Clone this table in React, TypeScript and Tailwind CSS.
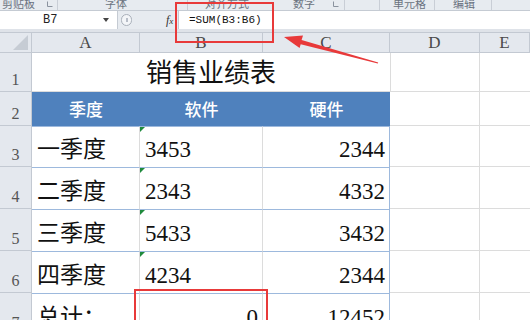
import React from "react";

const SERIF = "font-['Liberation_Serif','Noto_Sans_CJK_SC',serif]";
const CJK = "font-['Noto_Sans_CJK_SC',sans-serif]";
const GRID = "grid grid-cols-[32px_108px_123px_127px_90px_1fr]";

function RowHead({ n, h }: { n: string; h: string }) {
  return (
    <div className={`${h} flex items-end justify-center bg-[#e4e8ee] border-r border-b border-[#c3c9d2] text-[16px] leading-[18px] pb-[2px] text-[#555] font-['Liberation_Serif',serif]`}>
      {n}
    </div>
  );
}

function Tri() {
  return <div className="absolute left-0 top-0 w-0 h-0 border-t-[5px] border-r-[5px] border-t-[#1f8a3c] border-r-transparent" />;
}

function Launcher() {
  return (
    <svg width="6" height="6" viewBox="0 0 6 6" className="mt-[1px]">
      <path d="M0.5 0.5 V5.5 H5.5" fill="none" stroke="#8a929e" strokeWidth="1" />
    </svg>
  );
}

const rows = [
  { n: "3", label: "一季度", b: "3453", c: "2344", h: "h-[41px]" },
  { n: "4", label: "二季度", b: "2343", c: "4332", h: "h-[42px]" },
  { n: "5", label: "三季度", b: "5433", c: "3432", h: "h-[42px]" },
  { n: "6", label: "四季度", b: "4234", c: "2344", h: "h-[42px]" },
];

const cellText = `flex items-end pb-[4px] text-[23px] leading-[26px] text-[#111] ${SERIF}`;

export default function App() {
  return (
    <div className="relative w-[530px] h-[320px] overflow-hidden bg-white">
      {/* ribbon group labels (bottom strip only) */}
      <div className={`h-[11px] bg-[#e7ebf0] border-b border-[#c5cbd3] flex text-[11px] text-[#6b7380] overflow-hidden leading-[12px] ${CJK}`}>
        <div className="w-[58px] shrink-0 border-r border-[#c9ced6] flex items-start justify-between pl-[2px] pr-[4px]">
          <span className="-mt-[3px]">剪贴板</span>
          <Launcher />
        </div>
        <div className="w-[130px] shrink-0 border-r border-[#c9ced6] flex pl-[47px]">
          <span className="-mt-[3px]">字体</span>
        </div>
        <div className="w-[92px] shrink-0 flex pl-[17px]">
          <span className="-mt-[3px]">对齐方式</span>
        </div>
        <div className="w-[65px] shrink-0 border-r border-[#c9ced6] flex items-start justify-between pl-[13px] pr-[5px]">
          <span className="-mt-[3px]">数字</span>
          <Launcher />
        </div>
        <div className="w-[35px] shrink-0 border-r border-[#c9ced6]" />
        <div className="w-[55px] shrink-0 border-r border-[#c9ced6] flex pl-[13px]">
          <span className="-mt-[3px]">单元格</span>
        </div>
        <div className="w-[57px] shrink-0 border-r border-[#c9ced6] flex pl-[18px]">
          <span className="-mt-[3px]">编辑</span>
        </div>
        <div className="flex-1" />
      </div>

      {/* formula bar */}
      <div className="h-[18px] flex bg-[#e7ebf0]">
        <div className="w-[118px] bg-white border-r border-[#c5cbd3] flex items-center">
          <span className="ml-[43px] text-[12px] leading-[16px] text-[#222] font-['Liberation_Mono',monospace]">B7</span>
          <span className="ml-[46px] w-0 h-0 border-l-[3px] border-r-[3px] border-t-[4px] border-l-transparent border-r-transparent border-t-[#444]" />
        </div>
        <div className="w-[60px] flex items-center">
          <div className="ml-[3px] w-[11px] h-[12px] rounded-full border border-[#a9b0ba] bg-[#f3f5f8] flex items-center justify-center">
            <div className="w-[2px] h-[4px] bg-[#b8bec8]" />
          </div>
          <span className={`ml-[34px] italic text-[12px] leading-[16px] text-[#333] ${SERIF}`}>
            f<span className="text-[9px]">x</span>
          </span>
        </div>
        <div className="flex-1 bg-white border-l border-[#c5cbd3] flex items-center pl-[10px]">
          <span className="text-[11px] leading-[16px] text-[#111] font-['Liberation_Mono',monospace]">=SUM(B3:B6)</span>
        </div>
      </div>
      <div className="h-[3px] bg-[#dfe3e9]" />

      {/* sheet */}
      <div className={GRID}>
        {/* column headers */}
        <div className="h-[21px] bg-[#e4e8ee] border-t border-r border-b border-[#c3c9d2] flex items-end justify-end pr-[3px] pb-[2px]">
          <svg width="15" height="15" viewBox="0 0 15 15">
            <polygon points="15,0 15,15 0,15" fill="#c6ccd4" />
          </svg>
        </div>
        {["A", "B", "C", "D", "E"].map((l) => (
          <div key={l} className={`h-[21px] bg-[#e4e8ee] border-t border-r border-b border-[#c3c9d2] flex items-end justify-center text-[17px] leading-[18px] text-[#4a4a4a] ${SERIF}`}>
            {l}
          </div>
        ))}

        {/* row 1 */}
        <RowHead n="1" h="h-[39px]" />
        <div className={`col-span-3 border-b border-[#dcdcdc] flex items-end justify-center pb-[2px] text-[26px] leading-[30px] text-[#111] ${SERIF}`}>
          销售业绩表
        </div>
        <div className="border-r border-b border-[#dcdcdc] border-l" />
        <div className="border-b border-[#dcdcdc]" />

        {/* row 2 */}
        <RowHead n="2" h="h-[34px]" />
        <div className={`bg-[#4f81bd] flex items-center justify-center text-white text-[17px] font-medium ${CJK}`}>季度</div>
        <div className={`bg-[#4f81bd] flex items-center justify-center text-white text-[17px] font-medium ${CJK}`}>软件</div>
        <div className={`bg-[#4f81bd] flex items-center justify-center text-white text-[17px] font-medium ${CJK}`}>硬件</div>
        <div className="border-r border-b border-[#dcdcdc]" />
        <div className="border-b border-[#dcdcdc]" />

        {rows.map((r) => (
          <React.Fragment key={r.n}>
            <RowHead n={r.n} h={r.h} />
            <div className={`border-t border-[#9db9dd] border-r border-r-[#dcdcdc] pl-[5px] ${cellText}`}>{r.label}</div>
            <div className={`relative border-t border-[#9db9dd] border-r border-r-[#dcdcdc] pl-[5px] ${cellText}`}>
              <Tri />
              {r.b}
            </div>
            <div className={`border-t border-[#9db9dd] border-r border-r-[#9db9dd] justify-end pr-[4px] ${cellText}`}>{r.c}</div>
            <div className="border-r border-b border-[#dcdcdc]" />
            <div className="border-b border-[#dcdcdc]" />
          </React.Fragment>
        ))}

        {/* row 7 */}
        <RowHead n="7" h="h-[42px]" />
        <div className={`border-t border-[#9db9dd] border-r border-r-[#dcdcdc] pl-[5px] ${cellText}`}>总计：</div>
        <div className={`border-t border-[#9db9dd] border-r border-r-[#dcdcdc] justify-end pr-[4px] ${cellText}`}>0</div>
        <div className={`border-t border-[#9db9dd] border-r border-r-[#9db9dd] justify-end pr-[4px] ${cellText}`}>12452</div>
        <div className="border-r border-b border-[#dcdcdc]" />
        <div className="border-b border-[#dcdcdc]" />
      </div>

      {/* annotations */}
      <div className="absolute left-[175px] top-[2px] w-[99px] h-[41px] border-2 border-[#e83a3a]" />
      <div className="absolute left-[134px] top-[289px] w-[134px] h-[44px] border-2 border-[#e83a3a]" />
      <svg className="absolute left-0 top-0 pointer-events-none" width="530" height="320" viewBox="0 0 530 320">
        <polygon
          points="284,37 303,35.5 301.6,40 378.2,62.6 377.8,63.6 300.7,44.2 299.6,48"
          fill="#e8393a"
        />
      </svg>
    </div>
  );
}
